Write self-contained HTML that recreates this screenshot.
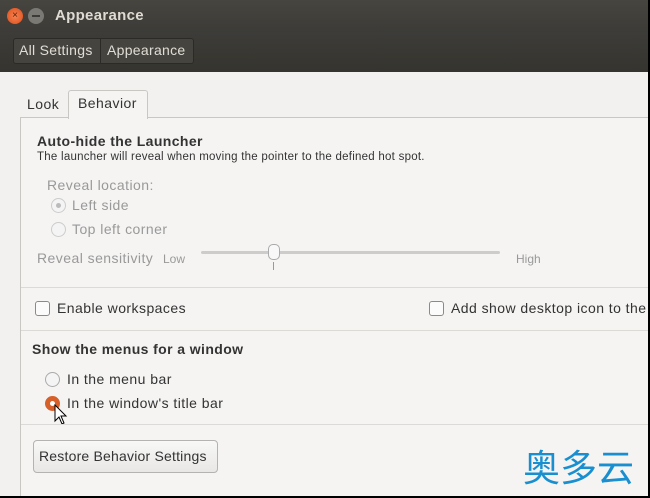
<!DOCTYPE html><html><head><style>
*{margin:0;padding:0;box-sizing:border-box}
body{width:650px;height:498px;overflow:hidden;background:#000;font-family:"Liberation Sans","DejaVu Sans",sans-serif;position:relative}
.a{position:absolute;white-space:nowrap}
#win{position:absolute;left:0;top:0;width:648px;height:496px;background:#f2f1f0;overflow:hidden}
#title{position:absolute;left:0;top:0;width:648px;height:32px;background:linear-gradient(#47453f,#3c3b37)}
#tool{position:absolute;left:0;top:32px;width:648px;height:40px;background:linear-gradient(#3d3c38,#35342f)}
.t{font-size:14px;color:#333;letter-spacing:0.45px}
.g{color:#999}
.cb{position:absolute;width:15px;height:15px;border:1px solid #8c8a87;border-radius:3px;background:#fbfbfb}
.rd{position:absolute;width:15px;height:15px;border-radius:50%;border:1px solid #aaa;background:#f4f4f4}
.sep{position:absolute;left:21px;width:627px;height:1px;background:#dcdad7}
</style></head><body><div id="win">
<div id="title">
 <div class="a" style="left:7px;top:8px;width:16px;height:16px;border-radius:50%;background:radial-gradient(#f58354,#dd4c17);color:#5a1f05;font-size:10px;text-align:center;line-height:16px">×</div>
 <div class="a" style="left:28px;top:8px;width:16px;height:16px;border-radius:50%;background:#7b7974"><div style="position:absolute;left:4px;top:7px;width:8px;height:2px;background:#3c3b37"></div></div>
 <div class="a" style="left:55px;top:7px;color:#dfdbd2;font-size:15px;font-weight:bold;letter-spacing:0.3px">Appearance</div>
</div>
<div id="tool">
 <div class="a" style="left:13px;top:6px;width:181px;height:26px;border:1px solid #2b2a27;border-radius:3px;background:#46443f"></div>
 <div class="a" style="left:100px;top:7px;width:1px;height:24px;background:#2b2a27"></div>
 <div class="a" style="left:19px;top:10px;color:#e0ddd6;font-size:14px;letter-spacing:0.3px">All Settings</div>
 <div class="a" style="left:107px;top:10px;color:#e0ddd6;font-size:14px;letter-spacing:0.3px">Appearance</div>
</div>
<div class="a" style="left:20px;top:117px;width:660px;height:400px;border:1px solid #c9c7c4;background:#f5f4f3"></div>
<div class="a" style="left:68px;top:90px;width:80px;height:29px;border:1px solid #c9c7c4;border-bottom:none;border-radius:3px 3px 0 0;background:#f5f4f3"></div>
<div class="a t" style="left:27px;top:96px">Look</div>
<div class="a t" style="left:78px;top:95px">Behavior</div>
<div class="a" style="left:37px;top:133px;font-size:14px;font-weight:bold;color:#333;letter-spacing:0.4px">Auto-hide the Launcher</div>
<div class="a" style="left:37px;top:151px;font-size:11.5px;color:#333;letter-spacing:0.25px">The launcher will reveal when moving the pointer to the defined hot spot.</div>
<div class="a t g" style="left:47px;top:177px">Reveal location:</div>
<div class="rd" style="left:51px;top:198px;border-color:#ccc"><div style="position:absolute;left:4px;top:4px;width:5px;height:5px;border-radius:50%;background:#bbb"></div></div>
<div class="a t g" style="left:72px;top:197px">Left side</div>
<div class="rd" style="left:51px;top:222px;border-color:#ccc"></div>
<div class="a t g" style="left:72px;top:221px">Top left corner</div>
<div class="a t g" style="left:37px;top:250px">Reveal sensitivity</div>
<div class="a g" style="left:163px;top:252px;font-size:12px">Low</div>
<div class="a" style="left:201px;top:251px;width:299px;height:3px;background:#ccc;border-radius:2px"></div>
<div class="a" style="left:268px;top:244px;width:12px;height:16px;border:1px solid #aaa;border-radius:5px;background:#f8f8f8"></div>
<div class="a" style="left:273px;top:262px;width:1px;height:8px;background:#999"></div>
<div class="a g" style="left:516px;top:252px;font-size:12px">High</div>
<div class="sep" style="top:287px"></div>
<div class="cb" style="left:35px;top:301px"></div>
<div class="a t" style="left:57px;top:300px">Enable workspaces</div>
<div class="cb" style="left:429px;top:301px"></div>
<div class="a t" style="left:451px;top:300px">Add show desktop icon to the</div>
<div class="sep" style="top:330px"></div>
<div class="a" style="left:32px;top:341px;font-size:14px;font-weight:bold;color:#333;letter-spacing:0.4px">Show the menus for a window</div>
<div class="rd" style="left:45px;top:372px"></div>
<div class="a t" style="left:67px;top:371px">In the menu bar</div>
<div class="rd" style="left:45px;top:396px;border:none;background:#d65f2a"><div style="position:absolute;left:5px;top:5px;width:5px;height:5px;border-radius:50%;background:#fff"></div></div>
<div class="a t" style="left:67px;top:395px">In the window's title bar</div>
<svg class="a" style="left:54px;top:404px" width="14" height="22" viewBox="0 0 14 22"><path d="M1 1V17L5 13L8 20L10 19L7 12H12Z" fill="#fff" stroke="#000" stroke-width="1"/></svg>
<div class="sep" style="top:424px"></div>
<div class="a" style="left:33px;top:440px;width:185px;height:33px;border:1px solid #b5b3b0;border-radius:4px;background:linear-gradient(#f8f8f7,#e8e7e6)"></div>
<div class="a t" style="left:39px;top:448px;letter-spacing:0.2px">Restore Behavior Settings</div>
<div class="a" style="left:523px;top:443px;font-size:37px;color:#1a8fd0;font-family:'Noto Sans CJK SC',sans-serif;line-height:44px">奥多云</div>
</div></body></html>
